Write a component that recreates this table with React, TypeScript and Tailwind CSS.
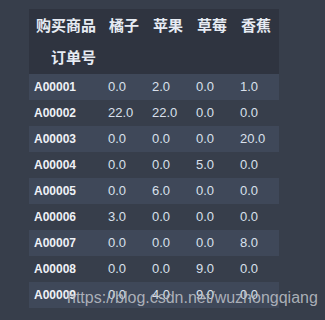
import React from "react";

const cols = ["橘子", "苹果", "草莓", "香蕉"];
const rows: [string, string[]][] = [
  ["A00001", ["0.0", "2.0", "0.0", "1.0"]],
  ["A00002", ["22.0", "22.0", "0.0", "0.0"]],
  ["A00003", ["0.0", "0.0", "0.0", "20.0"]],
  ["A00004", ["0.0", "0.0", "5.0", "0.0"]],
  ["A00005", ["0.0", "6.0", "0.0", "0.0"]],
  ["A00006", ["3.0", "0.0", "0.0", "0.0"]],
  ["A00007", ["0.0", "0.0", "0.0", "8.0"]],
  ["A00008", ["0.0", "0.0", "9.0", "0.0"]],
  ["A00009", ["0.0", "4.0", "9.0", "0.0"]],
];

export default function App() {
  return (
    <div className="relative w-[325px] h-[320px] bg-[#373e4b] overflow-hidden pt-[9px] pl-[29px] font-['Liberation_Sans',sans-serif]">
      <div className="w-[250px] flex flex-col">
        <div className="bg-[#2f3440] flex flex-col font-['Noto_Sans_CJK_SC',sans-serif] font-bold text-[15px] text-[#e6ebf3]">
          <div className="h-[32px] flex items-center">
            <div className="w-[74px] pl-[7px]">购买商品</div>
            {cols.map((c) => (
              <div key={c} className="w-[44px] pl-[6px]">
                {c}
              </div>
            ))}
          </div>
          <div className="h-[33px] flex items-center">
            <div className="w-[74px] pl-[22px]">订单号</div>
          </div>
        </div>
        {rows.map(([id, vals], i) => (
          <div
            key={id}
            className={`h-[26px] flex items-center ${i % 2 === 0 ? "bg-[#3f4859]" : "bg-[#373e4b]"}`}
          >
            <div className="w-[74px] pl-[5px] text-[12px] font-bold text-[#eef1f6]">{id}</div>
            {vals.map((v, j) => (
              <div key={j} className="w-[44px] pl-[5px] text-[13px] text-[#d9e0ec]">
                {v}
              </div>
            ))}
          </div>
        ))}
      </div>
      <div className="absolute left-[67px] top-[288px] text-[16px] leading-[20px] text-[#b9bdc4]/90 font-['Liberation_Sans',sans-serif]">
        https://blog.csdn.net/wuzhongqiang
      </div>
    </div>
  );
}
